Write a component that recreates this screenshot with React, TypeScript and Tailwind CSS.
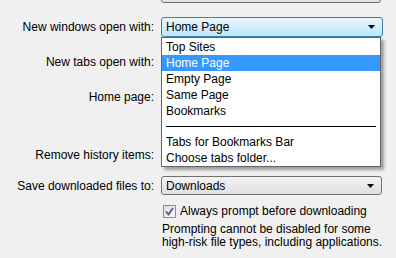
import React from "react";

const font = { fontFamily: '"Liberation Sans", Arial, sans-serif' };

function Arrow() {
  return (
    <svg width="7" height="4" viewBox="0 0 7 4" className="block">
      <path d="M0 0 H7 L3.5 4 Z" fill="#000" />
    </svg>
  );
}

function Row({ label, className, children }: { label?: string; className: string; children?: React.ReactNode }) {
  return (
    <div className={`flex items-center ${className}`}>
      <div className="w-[154px] shrink-0 text-right text-[12px] leading-[14px] text-black">{label}</div>
      <div className="ml-[7px] flex-1">{children}</div>
    </div>
  );
}

export default function App() {
  const items = ["Top Sites", "Home Page", "Empty Page", "Same Page", "Bookmarks"];
  return (
    <div className="relative w-[396px] h-[258px] overflow-hidden bg-[#f0f0f0] text-black" style={font}>
      <div className="flex flex-col">
        <Row className="h-[20px] -mt-[17px]">
          <div className="w-[220px] h-[20px] rounded-[3px] border border-[#707070] bg-gradient-to-b from-[#f2f2f2] to-[#e3e3e3]" />
        </Row>
        <Row label="New windows open with:" className="h-[20px] mt-[14px]">
          <div className="w-[222px] h-[20px] rounded-[3px] border border-[#3c7fb1] bg-gradient-to-b from-[#eaf6fd] to-[#bee6fd] flex items-center pl-[4px] pr-[7px] text-[12px]">
            <span className="flex-1">Home Page</span>
            <Arrow />
          </div>
        </Row>
        <Row label="New tabs open with:" className="h-[20px] mt-[15px]" />
        <Row label="Home page:" className="h-[20px] mt-[15px]" />
        <Row label="Remove history items:" className="h-[20px] mt-[38px]" />
        <Row label="Save downloaded files to:" className="h-[19px] mt-[11px]">
          <div className="w-[221px] h-[19px] rounded-[3px] border border-[#707070] bg-gradient-to-b from-[#f2f2f2] to-[#e0e0e0] flex items-center pl-[4px] pr-[7px] text-[12px]">
            <span className="flex-1">Downloads</span>
            <Arrow />
          </div>
        </Row>
        <div className="mt-[8px] ml-[163px] h-[16px] flex items-center">
          <div className="w-[13px] h-[13px] border border-[#8e8f8f] bg-gradient-to-br from-[#dcdcdc] to-[#fbfbfb] flex items-center justify-center">
            <svg width="9" height="9" viewBox="0 0 9 9">
              <path d="M1 4.5 L3.5 7.5 L8 1" stroke="#4a5f97" strokeWidth="1.8" fill="none" />
            </svg>
          </div>
          <span className="ml-[4px] text-[12px] leading-[14px]">Always prompt before downloading</span>
        </div>
        <div className="mt-[4px] ml-[162px] text-[12px] leading-[13px]">
          Prompting cannot be disabled for some
          <br />
          high-risk file types, including applications.
        </div>
      </div>

      <div className="absolute left-[161px] top-[37px] w-[220px] h-[130px] border border-[#646464] bg-white shadow-[3px_3px_3px_rgba(0,0,0,0.35)] pt-[1px] text-[12px]">
        {items.map((t) => (
          <div
            key={t}
            className={`h-[16px] flex items-center pl-[4px] ${t === "Home Page" ? "bg-[#3399ff] text-white" : ""}`}
          >
            {t}
          </div>
        ))}
        <div className="h-[15px] flex items-center px-[4px]">
          <div className="h-px w-full bg-black" />
        </div>
        <div className="h-[16px] flex items-center pl-[4px]">Tabs for Bookmarks Bar</div>
        <div className="h-[16px] flex items-center pl-[4px]">Choose tabs folder...</div>
      </div>
    </div>
  );
}
